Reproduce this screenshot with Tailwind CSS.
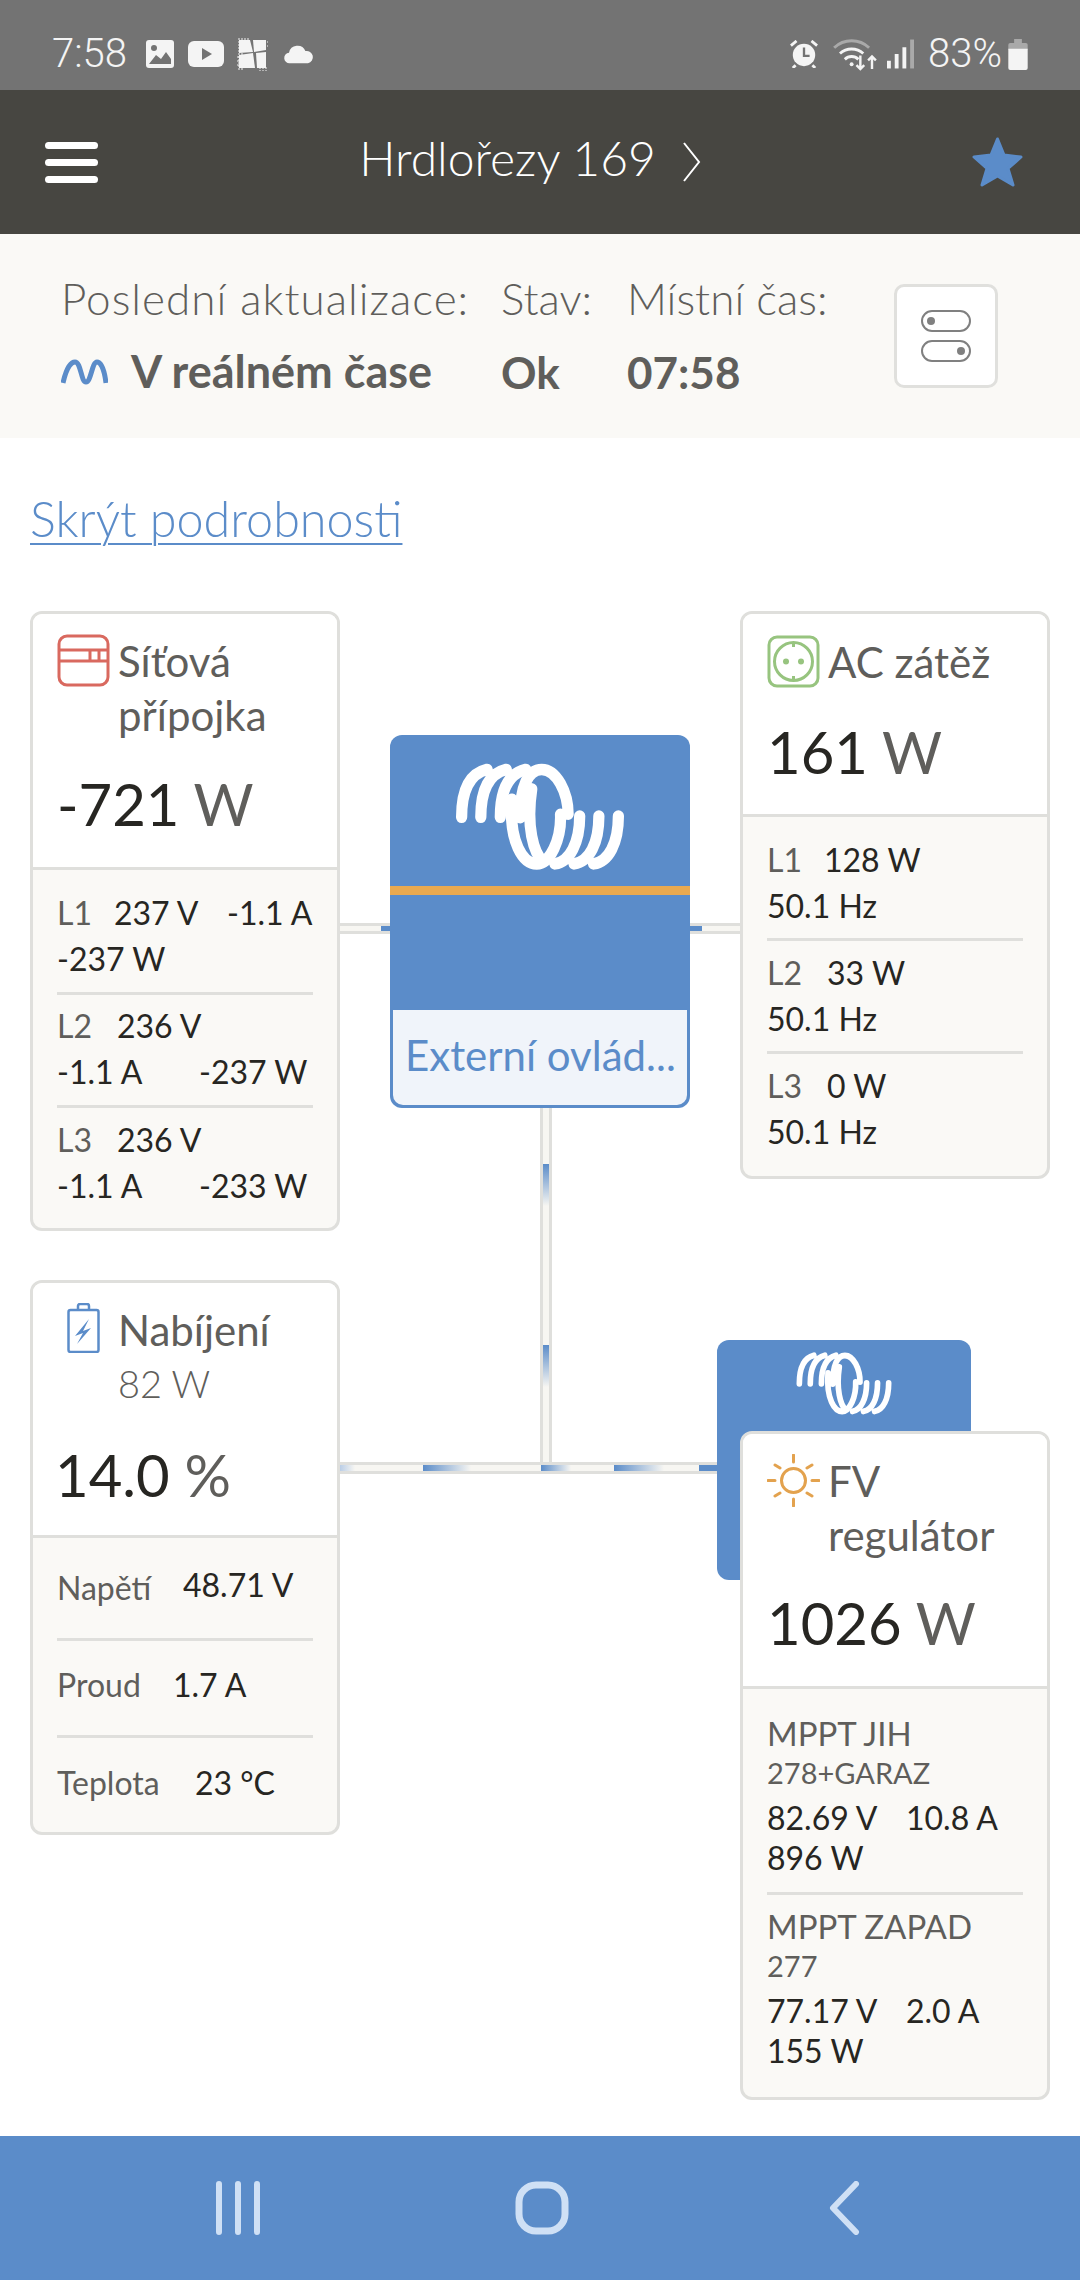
<!DOCTYPE html>
<html lang="cs">
<head>
<meta charset="UTF-8">
<meta name="viewport" content="width=device-width, initial-scale=1.0">
<title>VRM</title>
<script src="https://cdn.jsdelivr.net/npm/@tailwindcss/browser@4"></script>
</head>
<body class="bg-white font-[Lato] text-[#5f5e5b]">
<div class="relative w-[1080px] h-[2280px] overflow-hidden flex flex-col">

  <!-- status bar -->
  <div class="h-[90px] shrink-0 bg-[#737373] flex items-center justify-between pt-[18px] pl-[52px] pr-[52px] text-[#f4f4f4] font-[Roboto] text-[40px] font-light">
    <div class="flex items-center">
      <span class="mr-[19px]">7:58</span>
      <svg width="28" height="28" viewBox="0 0 28 28" class="mr-[14px]"><rect width="28" height="28" rx="3" fill="#f4f4f4"/><circle cx="8" cy="8" r="3" fill="#737373"/><path d="M3 24l7-9 5 4 5-7 5 7v5H3z" fill="#737373"/></svg>
      <svg width="36" height="26" viewBox="0 0 36 26" class="mr-[12px]"><rect width="36" height="26" rx="6" fill="#f4f4f4"/><path d="M14 7l10 6-10 6z" fill="#737373"/></svg>
      <svg width="32" height="34" viewBox="0 0 32 34" fill="#f4f4f4" class="mr-[14px]"><path d="M3 3h11l3 12-14 1z"/><path d="M17 3h13v10l-12 2z"/><path d="M3 18l14-2 2 15H3z"/><path d="M20 16l10-1v16H21z"/><path d="M3 1v32M6 1v32M1 20h4M1 24h4M1 28h4M9 1v3M12 1v3M24 30v4M27 30v4M30 30v4M28 5h4M28 9h4" stroke="#f4f4f4" stroke-width="1" stroke-dasharray="2 1"/></svg>
      <svg width="33" height="19" viewBox="0 0 34 22"><path d="M7 21a6 6 0 0 1-1-12 10 10 0 0 1 19-2 7 7 0 0 1 3 14z" fill="#f4f4f4"/></svg>
    </div>
    <div class="flex items-center">
      <svg width="28" height="28" viewBox="0 0 30 30" class="mr-[15px]"><circle cx="15" cy="16" r="12" fill="#f4f4f4"/><path d="M1 6l6-5M29 6l-6-5M6 27l-3 3M24 27l3 3" stroke="#f4f4f4" stroke-width="3"/><path d="M15 8v9h6" stroke="#737373" stroke-width="2.500" fill="none"/></svg>
      <svg width="45" height="33" viewBox="0 0 46 34" fill="none" class="mr-[9px]"><path d="M1 10a26 26 0 0 1 36 0" stroke="#a9a9a9" stroke-width="3"/><path d="M7 16a18 18 0 0 1 24 0M12 22a10 10 0 0 1 14 0" stroke="#f4f4f4" stroke-width="3"/><circle cx="19" cy="27" r="2" fill="#f4f4f4"/><path d="M28 18v14M24 28l4 4 4-4M40 32V19M36 23l4-4 4 4" stroke="#f4f4f4" stroke-width="2.500"/></svg>
      <svg width="27" height="30" viewBox="0 0 28 30" class="mr-[14px]"><rect x="0" y="22" width="4" height="8" fill="#f4f4f4"/><rect x="8" y="15" width="4" height="15" fill="#f4f4f4"/><rect x="16" y="8" width="4" height="22" fill="#f4f4f4"/><rect x="24" y="0" width="4" height="30" fill="#a9a9a9"/></svg>
      <span>83%</span>
      <svg width="20" height="31" viewBox="0 0 20 32" class="ml-[6px]"><path d="M6 0h8v4h4a2 2 0 0 1 2 2v5H0V6a2 2 0 0 1 2-2h4z" fill="#a9a9a9"/><path d="M0 10h20v20a2 2 0 0 1-2 2H2a2 2 0 0 1-2-2z" fill="#f4f4f4"/></svg>
    </div>
  </div>

  <!-- header -->
  <div class="h-[144px] shrink-0 bg-[#474641] flex items-center justify-between pl-[45px] pr-[57px]">
    <div class="flex flex-col gap-[10px]">
      <div class="w-[53px] h-[7px] rounded-full bg-white"></div>
      <div class="w-[53px] h-[7px] rounded-full bg-white"></div>
      <div class="w-[53px] h-[7px] rounded-full bg-white"></div>
    </div>
    <div class="flex items-center gap-[26px] text-white text-[48px] font-light mr-[9px] -mt-[8px]">
      <span>Hrdlořezy 169</span>
      <svg width="20" height="42" viewBox="0 0 20 42" fill="none" class="mt-[8px]"><path d="M2 2l15 19L2 40" stroke="#fff" stroke-width="2"/></svg>
    </div>
    <svg width="51" height="50" viewBox="0 0 51 50"><path d="M25.500 2l6.500 16 17 2-13 11.500 5 16.500-15.500-9-15.500 9 5-16.500L2 20l17-2z" fill="#5b8cc9" stroke="#5b8cc9" stroke-width="3" stroke-linejoin="round"/></svg>
  </div>

  <!-- info band -->
  <div class="h-[204px] shrink-0 bg-[#faf9f6] flex items-center pl-[61px] text-[44px] font-light">
    <div class="w-[440px]">
      <div class="h-[64px] flex items-center tracking-[1px] -mt-[2px]">Poslední aktualizace:</div>
      <div class="flex items-center gap-[23px] h-[64px] mt-[10px] font-bold text-[45px]">
        <svg width="47" height="26" viewBox="0 0 47 26" fill="none"><path d="M2 24C6 6 11 3 14 3c6 0 6 20 11 20s6-20 11-20c3 0 7 5 9 21" stroke="#5b8cc9" stroke-width="5"/></svg>
        <span>V reálném čase</span>
      </div>
    </div>
    <div class="w-[126px]">
      <div class="h-[64px] flex items-center -mt-[2px]">Stav:</div>
      <div class="h-[64px] mt-[10px] flex items-center font-bold text-[44px]">Ok</div>
    </div>
    <div class="w-[267px]">
      <div class="h-[64px] flex items-center -mt-[2px]">Místní čas:</div>
      <div class="h-[64px] mt-[10px] flex items-center font-bold text-[44px]">07:58</div>
    </div>
    <div class="w-[104px] h-[104px] bg-white border-[3px] border-[#e0e0dd] rounded-[10px] flex flex-col items-center justify-center gap-[8px]">
      <div class="w-[50px] h-[22px] rounded-full border-[2px] border-[#808080] flex items-center justify-start px-[4px]"><div class="w-[8px] h-[8px] rounded-full bg-[#808080]"></div></div>
      <div class="w-[50px] h-[22px] rounded-full border-[2px] border-[#808080] flex items-center justify-end px-[4px]"><div class="w-[8px] h-[8px] rounded-full bg-[#808080]"></div></div>
    </div>
  </div>

  <!-- diagram -->
  <div class="relative flex-1">
    <a class="absolute left-[30px] top-[44px] text-[48.500px] font-light text-[#5b8cc9] underline underline-offset-[6px] decoration-[2px]">Skrýt podrobnosti</a>
  </div>

  <!-- nav bar -->
  <div class="h-[144px] shrink-0 bg-[#5b8cc9] flex items-center justify-between pl-[213px] pr-[220px]">
    <svg width="50" height="54" viewBox="0 0 50 54" fill="none"><path d="M6 3v48M25 3v48M44 3v48" stroke="#cfe0f5" stroke-width="6" stroke-linecap="round"/></svg>
    <svg width="54" height="54" viewBox="0 0 54 54" fill="none" class="mr-[8px]"><rect x="4" y="4" width="46" height="46" rx="17" stroke="#cfe0f5" stroke-width="7"/></svg>
    <svg width="32" height="54" viewBox="0 0 32 54" fill="none"><path d="M28 3L5 27l23 24" stroke="#cfe0f5" stroke-width="6" stroke-linecap="round" stroke-linejoin="round"/></svg>
  </div>

  <!-- pipes -->
  <div class="absolute left-[339px] top-[923px] w-[51px] h-[11px] bg-[#f7f6f2] border-y-[3px] border-[#dfdfdc] flex justify-end"><div class="w-[9px] bg-[#5b8cc9]"></div></div>
  <div class="absolute left-[690px] top-[923px] w-[51px] h-[11px] bg-[#f7f6f2] border-y-[3px] border-[#dfdfdc]"><div class="w-[12px] h-full bg-[#5b8cc9]"></div></div>
  <div class="absolute left-[540px] top-[1107px] w-[12px] h-[360px] bg-[#f7f6f2] border-x-[3px] border-[#dfdfdc]">
    <div class="absolute left-0 top-[57px] w-full h-[42px] bg-linear-to-b from-[#5b8cc9] to-transparent"></div>
    <div class="absolute left-0 top-[238px] w-full h-[42px] bg-linear-to-b from-[#5b8cc9] to-transparent"></div>
  </div>
  <div class="absolute left-[339px] top-[1462px] w-[378px] h-[12px] bg-[#f7f6f2] border-y-[3px] border-[#dfdfdc]">
    <div class="absolute left-0 top-0 h-full w-[16px] bg-linear-to-r from-[#b6cbe6] to-transparent"></div>
    <div class="absolute left-[84px] top-0 h-full w-[48px] bg-linear-to-r from-[#5b8cc9] to-transparent"></div>
    <div class="absolute left-[202px] top-0 h-full w-[30px] bg-linear-to-r from-[#5b8cc9] to-transparent"></div>
    <div class="absolute left-[275px] top-0 h-full w-[50px] bg-linear-to-r from-[#5b8cc9] to-transparent"></div>
    <div class="absolute left-[360px] top-0 h-full w-[18px] bg-[#5b8cc9]"></div>
  </div>

  <!-- inverter -->
  <div class="absolute left-[390px] top-[735px] w-[300px] h-[373px] rounded-[12px] bg-[#5b8cc9] overflow-hidden flex flex-col">
    <div class="h-[151px] shrink-0 flex items-start justify-center pt-[27px]">
      <svg width="172" height="108" viewBox="40 40 520 320" preserveAspectRatio="none" fill="none" stroke="#fff" stroke-width="34" stroke-linecap="round"><path d="M63 204C63 130 85 75 140 62M121 204C121 130 143 75 198 62M180 204C180 130 202 75 257 62"/><path d="M240 205C240 110 265 62 305 62C350 62 385 130 385 195M275 120C258 230 280 310 310 335M215 150C205 280 250 342 290 342C330 342 365 270 362 195"/><path d="M420 200C420 280 390 335 345 342M478 200C478 280 450 335 403 342M537 200C537 280 508 335 462 342"/></svg>
    </div>
    <div class="h-[9px] shrink-0 bg-[#e9a94f]"></div>
    <div class="h-[115px] shrink-0"></div>
    <div class="flex-1 mx-[3px] mb-[3px] rounded-b-[10px] bg-[#f0f4fa] flex items-center pl-[12px] pb-[4px] text-[42px] text-[#5b8cc9]">Externí ovlád...</div>
  </div>

  <!-- solar charger behind card -->
  <div class="absolute left-[717px] top-[1340px] w-[254px] h-[240px] rounded-[12px] bg-[#5b8cc9] flex justify-center pt-[11px]">
    <svg width="98" height="64" viewBox="40 40 520 320" preserveAspectRatio="none" fill="none" stroke="#fff" stroke-width="30" stroke-linecap="round"><path d="M63 204C63 130 85 75 140 62M121 204C121 130 143 75 198 62M180 204C180 130 202 75 257 62"/><path d="M240 205C240 110 265 62 305 62C350 62 385 130 385 195M275 120C258 230 280 310 310 335M215 150C205 280 250 342 290 342C330 342 365 270 362 195"/><path d="M420 200C420 280 390 335 345 342M478 200C478 280 450 335 403 342M537 200C537 280 508 335 462 342"/></svg>
  </div>

  <!-- grid card -->
  <div class="absolute left-[30px] top-[611px] w-[310px] h-[620px] border-[3px] border-[#dfdfdc] rounded-[12px] bg-[#faf9f6] overflow-hidden flex flex-col">
    <div class="h-[256px] shrink-0 bg-white border-b-[3px] border-[#dfdfdc] pl-[24px] pt-[20px]">
      <div class="flex gap-[8px]">
        <svg width="53" height="53" viewBox="0 0 53 53" fill="none" class="shrink-0" stroke="#d9695f" stroke-width="3"><rect x="2" y="2" width="49" height="49" rx="8"/><path d="M2 16h49M2 27h49M33 16v11M42 16v11"/></svg>
        <div class="text-[42px] leading-[54px]">Síťová<br>přípojka</div>
      </div>
      <div class="mt-[27px] text-[58px] leading-[70px] text-[#272622]">-721 <span class="text-[#5f5e5b]">W</span></div>
    </div>
    <div class="px-[24px] text-[32px] leading-[46px] text-[#272622] pt-[20px] whitespace-nowrap">
      <div class="pb-[10px] border-b-[3px] border-[#dfdfdc]">
        <div class="flex"><span class="text-[#5f5e5b] w-[57px]">L1</span><span class="w-[113px]">237 V</span><span>-1.1 A</span></div>
        <div>-237 W</div>
      </div>
      <div class="pt-[8px] pb-[10px] border-b-[3px] border-[#dfdfdc]">
        <div class="flex"><span class="text-[#5f5e5b] w-[60px]">L2</span><span>236 V</span></div>
        <div class="flex"><span class="w-[142px]">-1.1 A</span><span>-237 W</span></div>
      </div>
      <div class="pt-[9px]">
        <div class="flex"><span class="text-[#5f5e5b] w-[60px]">L3</span><span>236 V</span></div>
        <div class="flex"><span class="w-[142px]">-1.1 A</span><span>-233 W</span></div>
      </div>
    </div>
  </div>

  <!-- load card -->
  <div class="absolute left-[740px] top-[611px] w-[310px] h-[568px] border-[3px] border-[#dfdfdc] rounded-[12px] bg-[#faf9f6] overflow-hidden flex flex-col">
    <div class="h-[203px] shrink-0 bg-white border-b-[3px] border-[#dfdfdc] pl-[24px] pt-[21px]">
      <div class="flex gap-[8px]">
        <svg width="53" height="53" viewBox="0 0 53 53" fill="none" class="shrink-0"><rect x="2" y="2" width="49" height="49" rx="8" stroke="#97c47f" stroke-width="3"/><circle cx="26.500" cy="26.500" r="19" stroke="#97c47f" stroke-width="3"/><circle cx="19" cy="26.500" r="3" fill="#97c47f"/><circle cx="34" cy="26.500" r="3" fill="#97c47f"/><path d="M26.500 7v5M26.500 41v5" stroke="#97c47f" stroke-width="3"/></svg>
        <div class="text-[42px] leading-[54px]">AC zátěž</div>
      </div>
      <div class="mt-[28px] text-[58px] leading-[70px] text-[#272622]">161 <span class="text-[#5f5e5b]">W</span></div>
    </div>
    <div class="px-[24px] text-[32px] leading-[46px] text-[#272622] pt-[20px]">
      <div class="pb-[9px] border-b-[3px] border-[#dfdfdc]">
        <div class="flex"><span class="text-[#5f5e5b] w-[57px]">L1</span><span>128 W</span></div>
        <div>50.1 Hz</div>
      </div>
      <div class="py-[9px] border-b-[3px] border-[#dfdfdc]">
        <div class="flex"><span class="text-[#5f5e5b] w-[60px]">L2</span><span>33 W</span></div>
        <div>50.1 Hz</div>
      </div>
      <div class="pt-[9px]">
        <div class="flex"><span class="text-[#5f5e5b] w-[60px]">L3</span><span>0 W</span></div>
        <div>50.1 Hz</div>
      </div>
    </div>
  </div>

  <!-- battery card -->
  <div class="absolute left-[30px] top-[1280px] w-[310px] h-[555px] border-[3px] border-[#dfdfdc] rounded-[12px] bg-[#faf9f6] overflow-hidden flex flex-col">
    <div class="h-[255px] shrink-0 bg-white border-b-[3px] border-[#dfdfdc] pl-[34px] pt-[21px]">
      <div class="flex gap-[18px]">
        <svg width="33" height="50" viewBox="0 0 33 50" fill="none" class="shrink-0 mt-[-1px]" stroke="#5b8cc9" stroke-width="2.500"><rect x="1.500" y="7" width="30" height="42" rx="2"/><path d="M11 7V3a2 2 0 0 1 2-2h7a2 2 0 0 1 2 2v4"/><path d="M22 16L8 33l8-3-6 11 14-16-8 3z" fill="#5b8cc9" stroke="none"/></svg>
        <div class="text-[42px] leading-[52px]">Nabíjení<br><span class="text-[38px] font-light">82 W</span></div>
      </div>
      <div class="mt-[31px] -ml-[12px] text-[58px] leading-[70px] text-[#272622]">14.0 <span class="text-[#5f5e5b]">%</span></div>
    </div>
    <div class="px-[24px] text-[32px] text-[#272622]">
      <div class="h-[103px] flex items-center border-b-[3px] border-[#dfdfdc]"><span class="text-[#5f5e5b] w-[126px]">Napětí</span><span class="-mt-[6px]">48.71 V</span></div>
      <div class="h-[97px] pb-[6px] flex items-center border-b-[3px] border-[#dfdfdc]"><span class="text-[#5f5e5b] w-[116px]">Proud</span><span>1.7 A</span></div>
      <div class="h-[90px] flex items-center"><span class="text-[#5f5e5b] w-[138px]">Teplota</span><span>23 °C</span></div>
    </div>
  </div>

  <!-- solar card -->
  <div class="absolute left-[740px] top-[1431px] w-[310px] h-[669px] border-[3px] border-[#dfdfdc] rounded-[12px] bg-[#faf9f6] overflow-hidden flex flex-col">
    <div class="h-[255px] shrink-0 bg-white border-b-[3px] border-[#dfdfdc] pl-[24px] pt-[20px]">
      <div class="flex gap-[8px]">
        <svg width="53" height="53" viewBox="0 0 53 53" fill="none" class="shrink-0" stroke="#e3a24e" stroke-width="3"><circle cx="26.500" cy="26.500" r="12"/><path d="M26.500 1v7M26.500 45v7M1 26.500h7M45 26.500h7M8 11l5 3M45 11l-5 3M8 42l5-3M45 42l-5-3" stroke-linecap="round"/></svg>
        <div class="text-[42px] leading-[54px]">FV<br>regulátor</div>
      </div>
      <div class="mt-[26px] text-[58px] leading-[70px] text-[#272622]">1026 <span class="text-[#5f5e5b]">W</span></div>
    </div>
    <div class="px-[24px] text-[32px] leading-[40px] text-[#272622] pt-[24px] whitespace-nowrap">
      <div class="pb-[14px] border-b-[3px] border-[#dfdfdc]">
        <div class="text-[#5f5e5b] text-[33px]">MPPT JIH</div>
        <div class="text-[#5f5e5b] text-[29px]">278+GARAZ</div>
        <div class="flex mt-[5px]"><span class="w-[139px]">82.69 V</span><span>10.8 A</span></div>
        <div>896 W</div>
      </div>
      <div class="pt-[11px]">
        <div class="text-[#5f5e5b] text-[33px]">MPPT ZAPAD</div>
        <div class="text-[#5f5e5b] text-[29px]">277</div>
        <div class="flex mt-[5px]"><span class="w-[139px]">77.17 V</span><span>2.0 A</span></div>
        <div>155 W</div>
      </div>
    </div>
  </div>
</div>
</body>
</html>
